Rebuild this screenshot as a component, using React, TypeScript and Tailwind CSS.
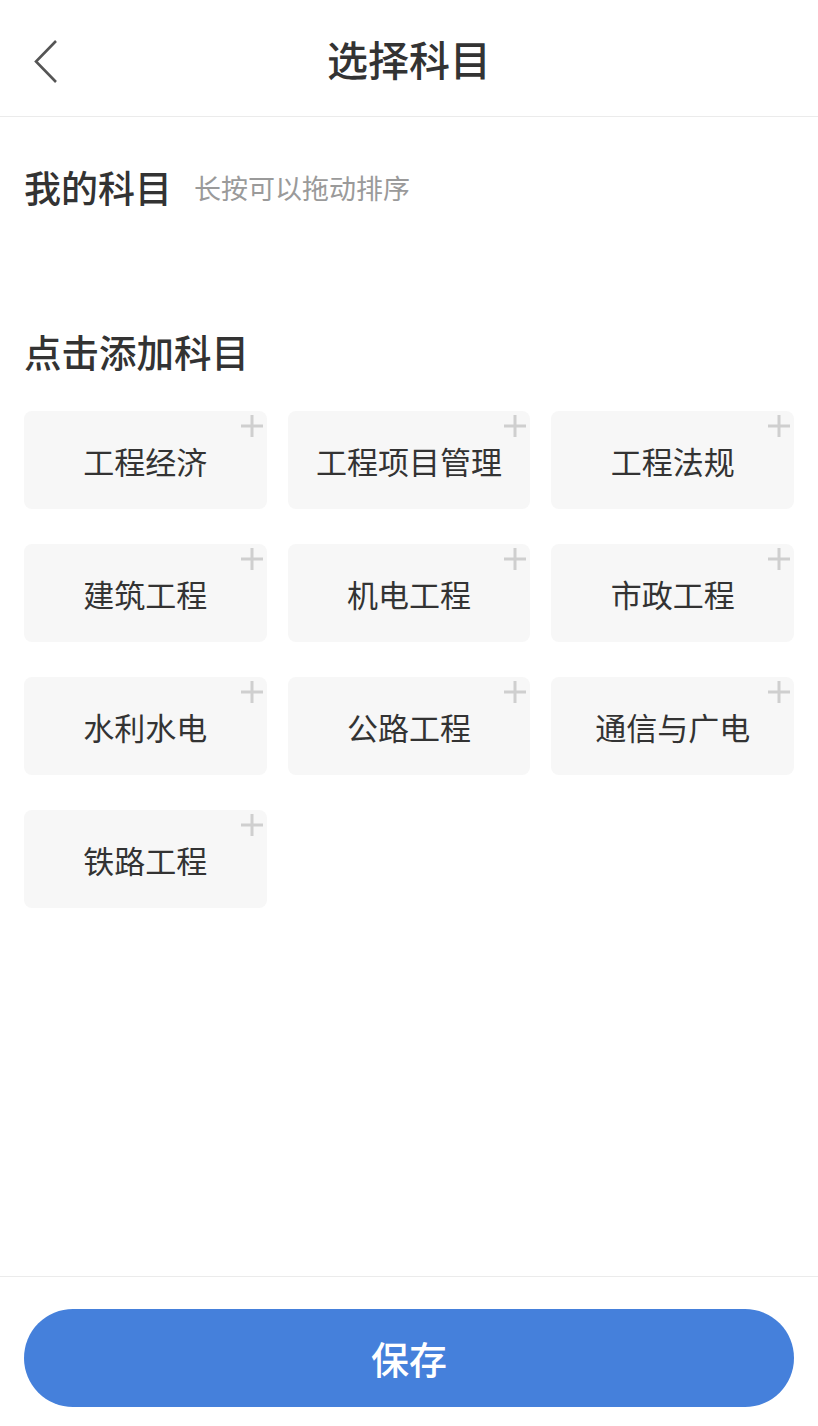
import React from "react";

const subjects = [
  "工程经济",
  "工程项目管理",
  "工程法规",
  "建筑工程",
  "机电工程",
  "市政工程",
  "水利水电",
  "公路工程",
  "通信与广电",
  "铁路工程",
];

const font = { fontFamily: '"Noto Sans CJK SC", "Noto Sans", sans-serif' };

function SubjectCard({ name }: { name: string }) {
  return (
    <div className="relative flex h-[98px] items-center justify-center rounded-[8px] bg-[#f7f7f7]">
      <span className="text-[31px] leading-none text-[#333333]">{name}</span>
      <svg
        className="absolute right-[4px] top-[4px]"
        width="22"
        height="22"
        viewBox="0 0 22 22"
      >
        <path d="M11 0V22M0 11H22" stroke="#cfcfcf" strokeWidth="3" />
      </svg>
    </div>
  );
}

export default function App() {
  return (
    <div className="flex h-screen flex-col bg-white" style={font}>
      <header className="relative flex h-[117px] shrink-0 items-center justify-center border-b border-[#ebebeb]">
        <svg
          className="absolute left-[34px] top-[40px]"
          width="24"
          height="43"
          viewBox="0 0 24 43"
        >
          <path
            d="M22 1L2 21.5L22 42"
            fill="none"
            stroke="#555555"
            strokeWidth="2.6"
          />
        </svg>
        <h1 className="text-[41px] font-medium leading-none text-[#333333]">
          选择科目
        </h1>
      </header>

      <main className="flex-1 px-[24px]">
        <div className="mt-[45px] flex h-[50px] items-center gap-[22px]">
          <h2 className="text-[37px] font-medium leading-none text-[#333333]">
            我的科目
          </h2>
          <span className="text-[27px] leading-none text-[#9a9a9a]">
            长按可以拖动排序
          </span>
        </div>

        <h2 className="mt-[114px] flex h-[50px] items-center text-[37.5px] font-medium leading-none text-[#333333]">
          点击添加科目
        </h2>

        <div className="mt-[35px] grid grid-cols-3 gap-x-[21px] gap-y-[35px]">
          {subjects.map((s) => (
            <SubjectCard key={s} name={s} />
          ))}
        </div>
      </main>

      <footer className="shrink-0 border-t border-[#ebebeb] px-[24px] pb-[19px] pt-[32px]">
        <button className="flex h-[98px] w-full items-center justify-center rounded-full bg-[#4580db] text-[38px] font-medium leading-none text-white">
          保存
        </button>
      </footer>
    </div>
  );
}
